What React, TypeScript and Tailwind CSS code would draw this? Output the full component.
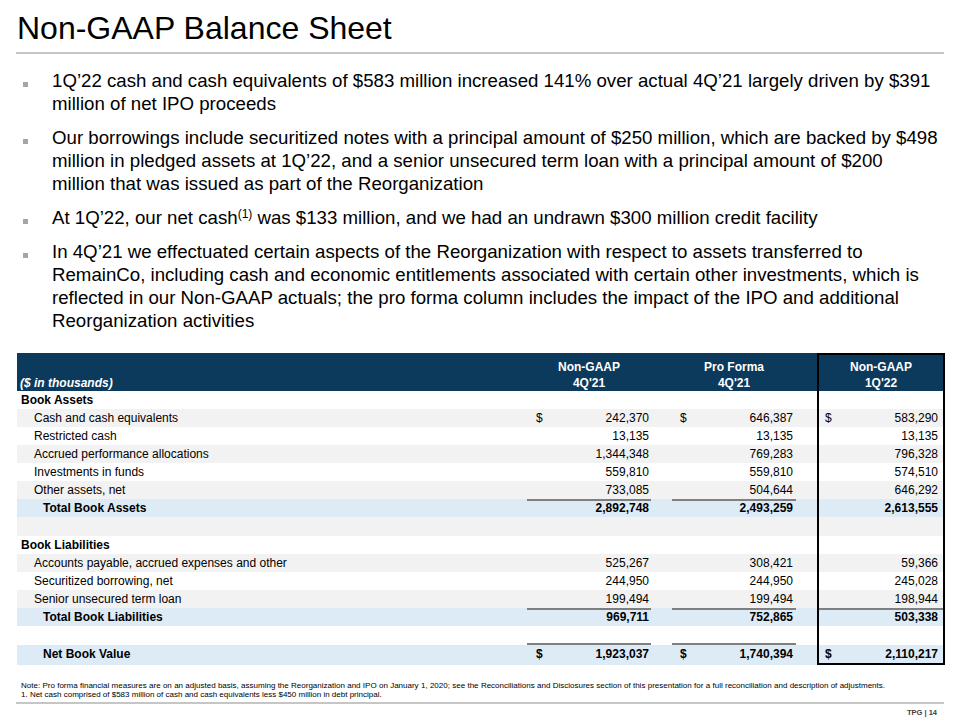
import React from "react";

type Row = {
  label: string;
  kind?: "section" | "item" | "total" | "blank";
  bg: string;
  vals?: string[];
  dollar?: boolean;
  rule?: boolean[];
  last?: boolean;
};

const GRAY = "bg-[#f2f2f2]";
const WHITE = "bg-white";
const BLUE = "bg-[#ddebf7]";

const rows: Row[] = [
  { label: "Book Assets", kind: "section", bg: WHITE },
  { label: "Cash and cash equivalents", bg: GRAY, vals: ["242,370", "646,387", "583,290"], dollar: true },
  { label: "Restricted cash", bg: WHITE, vals: ["13,135", "13,135", "13,135"] },
  { label: "Accrued performance allocations", bg: GRAY, vals: ["1,344,348", "769,283", "796,328"] },
  { label: "Investments in funds", bg: WHITE, vals: ["559,810", "559,810", "574,510"] },
  { label: "Other assets, net", bg: GRAY, vals: ["733,085", "504,644", "646,292"], rule: [true, true, false] },
  { label: "Total Book Assets", kind: "total", bg: BLUE, vals: ["2,892,748", "2,493,259", "2,613,555"] },
  { label: "", kind: "blank", bg: GRAY },
  { label: "Book Liabilities", kind: "section", bg: WHITE },
  { label: "Accounts payable, accrued expenses and other", bg: GRAY, vals: ["525,267", "308,421", "59,366"] },
  { label: "Securitized borrowing, net", bg: WHITE, vals: ["244,950", "244,950", "245,028"] },
  { label: "Senior unsecured term loan", bg: GRAY, vals: ["199,494", "199,494", "198,944"], rule: [true, true, true] },
  { label: "Total Book Liabilities", kind: "total", bg: BLUE, vals: ["969,711", "752,865", "503,338"] },
  { label: "", kind: "blank", bg: WHITE, rule: [true, true, false] },
  { label: "Net Book Value", kind: "total", bg: BLUE, vals: ["1,923,037", "1,740,394", "2,110,217"], dollar: true, last: true },
];

const bullets: React.ReactNode[][] = [
  [
    "1Q’22 cash and cash equivalents of $583 million increased 141% over actual 4Q’21 largely driven by $391",
    "million of net IPO proceeds",
  ],
  [
    "Our borrowings include securitized notes with a principal amount of $250 million, which are backed by $498",
    "million in pledged assets at 1Q’22, and a senior unsecured term loan with a principal amount of $200",
    "million that was issued as part of the Reorganization",
  ],
  [
    <>
      At 1Q’22, our net cash<sup className="text-[12px]">(1)</sup> was $133 million, and we had an undrawn $300 million credit facility
    </>,
  ],
  [
    "In 4Q’21 we effectuated certain aspects of the Reorganization with respect to assets transferred to",
    "RemainCo, including cash and economic entitlements associated with certain other investments, which is",
    "reflected in our Non-GAAP actuals; the pro forma column includes the impact of the IPO and additional",
    "Reorganization activities",
  ],
];

function ValueCell({ v, dollar, bold, rule, pad }: { v?: string; dollar?: boolean; bold?: boolean; rule?: boolean; pad: string }) {
  return (
    <div className={`flex justify-between h-full ${pad} ${rule ? "border-b-2 border-[#7f7f7f]" : ""} ${bold ? "font-bold" : ""}`}>
      <span>{dollar ? "$" : ""}</span>
      <span>{v}</span>
    </div>
  );
}

function TableRow({ row }: { row: Row }) {
  const bold = row.kind === "section" || row.kind === "total";
  const labelPad = row.kind === "section" ? "pl-[4px]" : row.kind === "total" ? "pl-[26px]" : "pl-[17px]";
  const h = row.kind === "blank" ? "h-[19px]" : row.last ? "h-[20px]" : "h-[18px]";
  const r = row.rule ?? [false, false, false];
  return (
    <div className={`grid grid-cols-[510px_124px_21px_124px_21px_128px] ${h} ${row.bg} leading-[18px]`}>
      <div className={`${labelPad} ${bold ? "font-bold" : ""} whitespace-nowrap`}>{row.label}</div>
      <ValueCell v={row.vals?.[0]} dollar={row.dollar} bold={bold} rule={r[0]} pad="pl-[9px] pr-[2px]" />
      <div />
      <ValueCell v={row.vals?.[1]} dollar={row.dollar} bold={bold} rule={r[1]} pad="pl-[8px] pr-[3px]" />
      <div />
      <div className={`border-x-2 border-black ${row.last ? "border-b-2" : ""}`}>
        <ValueCell v={row.vals?.[2]} dollar={row.dollar} bold={bold} rule={r[2]} pad="pl-[6px] pr-[5px]" />
      </div>
    </div>
  );
}

export default function App() {
  return (
    <div className="w-[960px] h-[720px] bg-white text-black overflow-hidden font-['Liberation_Sans',Arial,sans-serif]">
      {/* Title */}
      <h1 className="pl-[17px] pt-[10px] text-[32px] leading-[36px]">Non-GAAP Balance Sheet</h1>
      <div className="mx-[16px] mt-[6px] h-[2px] bg-[#c6c6c6]" />

      {/* Bullets */}
      <div className="mt-[15px] flex flex-col gap-[11px]">
        {bullets.map((lines, i) => (
          <div key={i} className="flex">
            <div className="w-[52px] shrink-0 pl-[23px] pt-[13px]">
              <div className="w-[5px] h-[5px] bg-[#a6a6a6]" />
            </div>
            <div className="text-[18.67px] leading-[23px]">
              {lines.map((l, j) => (
                <div key={j} className="whitespace-nowrap">
                  {l}
                </div>
              ))}
            </div>
          </div>
        ))}
      </div>

      {/* Table */}
      <div className="ml-[17px] mt-[21px] w-[928px] text-[12px]">
        <div className="grid grid-cols-[510px_124px_21px_124px_21px_128px] h-[38px] bg-[#0b3a5c] text-white font-bold leading-[16px]">
          <div className="pl-[3px] pt-[22px] italic">($ in thousands)</div>
          <div className="pt-[6px] text-center">
            <div>Non-GAAP</div>
            <div>4Q'21</div>
          </div>
          <div />
          <div className="pt-[6px] text-center">
            <div>Pro Forma</div>
            <div>4Q'21</div>
          </div>
          <div />
          <div className="pt-[4px] text-center border-x-2 border-t-2 border-black">
            <div>Non-GAAP</div>
            <div>1Q'22</div>
          </div>
        </div>
        {rows.map((row, i) => (
          <TableRow key={i} row={row} />
        ))}
      </div>

      {/* Notes */}
      <div className="ml-[21px] mt-[16px] w-[864px] text-[8px] leading-[9px]">
        <div className="text-justify [text-align-last:justify]">
          Note: Pro forma financial measures are on an adjusted basis, assuming the Reorganization and IPO on January 1, 2020; see the Reconciliations and Disclosures section of this presentation for a full reconciliation and description of adjustments.
        </div>
        <div>1. Net cash comprised of $583 million of cash and cash equivalents less $450 million in debt principal.</div>
      </div>
      <div className="mx-[16px] mt-[3px] h-[2px] bg-[#c6c6c6]" />
      <div className="pr-[23px] pt-[3px] text-right text-[7.5px] font-bold text-[#404040]">TPG | 14</div>
    </div>
  );
}
